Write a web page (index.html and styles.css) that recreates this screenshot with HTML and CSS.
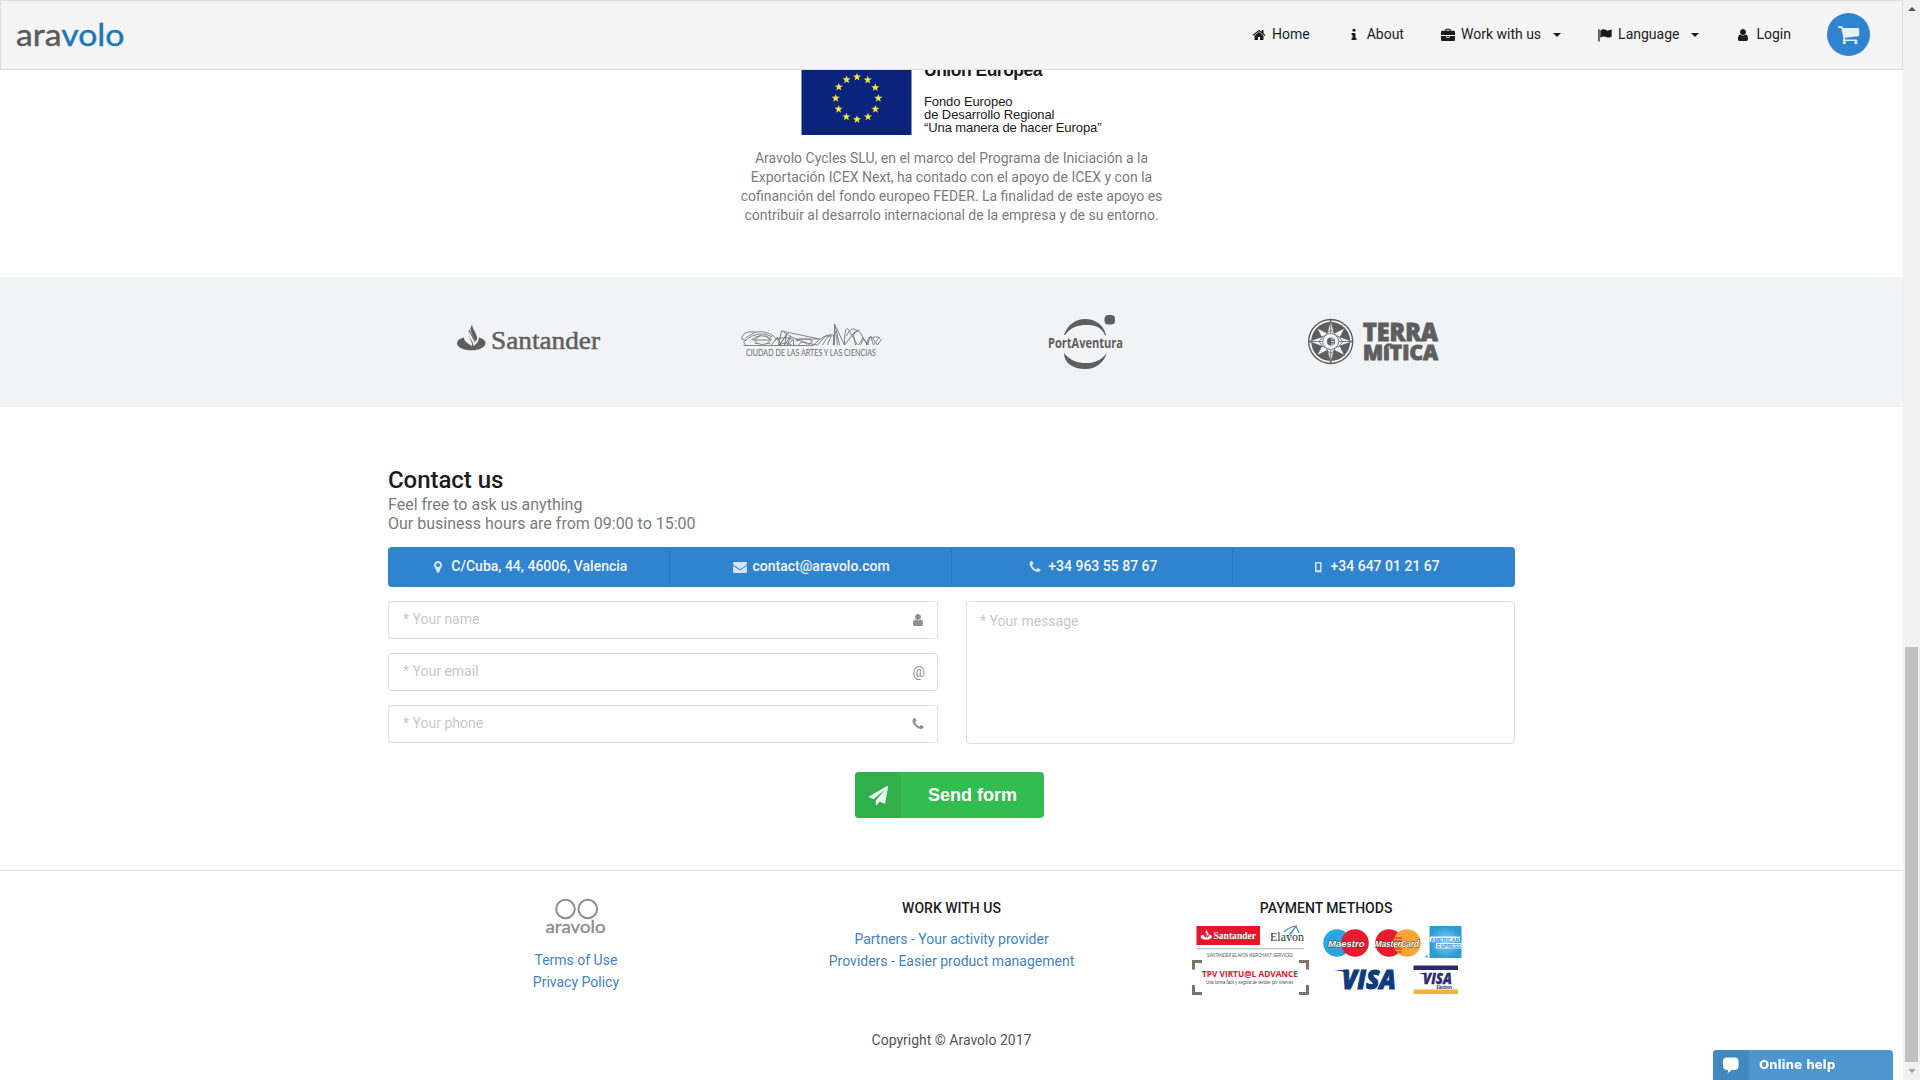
FILE: index.html
```html
<!DOCTYPE html>
<html lang="en">
<head>
<meta charset="utf-8">
<title>Aravolo</title>
<link rel="stylesheet" href="styles.css">
</head>
<body>
<svg class="defs" width="0" height="0" aria-hidden="true">
  <symbol id="home" viewBox="0 0 1792 1792"><path d="M1472 992v480q0 26-19 45t-45 19h-384v-384h-256v384h-384q-26 0-45-19t-19-45v-480q0-1 .5-3t.5-3l575-474 575 474q1 2 1 6zm223-69l-62 74q-8 9-21 11h-3q-13 0-21-7l-692-577-692 577q-12 8-24 7-13-2-21-11l-62-74q-8-10-7-23.5t11-21.5l719-599q32-26 76-26t76 26l244 204v-195q0-14 9-23t23-9h192q14 0 23 9t9 23v408l219 182q10 8 11 21.5t-7 23.5z"/></symbol>
  <symbol id="info" viewBox="0 0 1792 1792"><path d="M1216 1344v128q0 26-19 45t-45 19h-512q-26 0-45-19t-19-45v-128q0-26 19-45t45-19h64v-384h-64q-26 0-45-19t-19-45v-128q0-26 19-45t45-19h384q26 0 45 19t19 45v576h64q26 0 45 19t19 45zm-128-1152v192q0 26-19 45t-45 19h-256q-26 0-45-19t-19-45v-192q0-26 19-45t45-19h256q26 0 45 19t19 45z"/></symbol>
  <symbol id="briefcase" viewBox="0 0 14 14"><path d="M4.2 2.8V1.6Q4.2.7 5.1.7h3.8q.9 0 .9.900v1.200h2.900q1.300 0 1.300 1.300v3H0v-3q0-1.300 1.300-1.300zM5.300 2.800h3.400v-1H5.300zM0 8h5.300v1.300q0 .4.4.4h2.600q.4 0 .4-.4V8H14v3.800q0 1.300-1.300 1.300H1.300Q0 13.100 0 11.800zM6.200 8h1.600v.9H6.200z"/></symbol>
  <symbol id="flag" viewBox="0 0 14 14"><path d="M.3 1.200h1.300v12.300H.3zM2.300 2.500C5 .8 6.200.9 8 1.900c1.900 1 3.400.500 5.700-.6v7.100c-2.200 1.200-3.700 1.700-5.700.6-1.800-.9-3.200-.9-5.700.7z"/></symbol>
  <symbol id="user" viewBox="0 0 1792 1792"><path d="M1536 1399q0 109-62.500 187t-150.500 78h-854q-88 0-150.500-78t-62.500-187q0-85 8.500-160.500t31.500-152 58.500-131 94-89 134.500-34.500q131 128 313 128t313-128q76 0 134.500 34.500t94 89 58.500 131 31.500 152 8.500 160.500zm-256-887q0 159-112.500 271.500t-271.500 112.500-271.500-112.500-112.500-271.500 112.500-271.500 271.500-112.500 271.500 112.500 112.500 271.500z"/></symbol>
  <symbol id="cart" viewBox="0 0 1792 1792"><path d="M704 1536q0 52-38 90t-90 38-90-38-38-90 38-90 90-38 90 38 38 90zm896 0q0 52-38 90t-90 38-90-38-38-90 38-90 90-38 90 38 38 90zm128-1088v512q0 24-16.500 42.500t-40.500 21.500l-1044 122q13 60 13 70 0 16-24 64h920q26 0 45 19t19 45-19 45-45 19h-1024q-26 0-45-19t-19-45q0-11 8-31.500t16-36 21.500-40 15.500-29.500l-177-823h-204q-26 0-45-19t-19-45 19-45 45-19h256q16 0 28.500 6.500t19.500 15.500 13 24.500 8 26 5.500 29.500 4.500 26h1201q26 0 45 19t19 45z"/></symbol>
  <symbol id="marker" viewBox="0 0 1792 1792"><path d="M1152 640q0-106-75-181t-181-75-181 75-75 181 75 181 181 75 181-75 75-181zm256 0q0 109-33 179l-364 774q-16 33-47.500 52t-67.500 19-67.500-19-46.500-52l-365-774q-33-70-33-179 0-212 150-362t362-150 362 150 150 362z"/></symbol>
  <symbol id="mail" viewBox="0 0 1792 1792"><path d="M1792 710v794q0 66-47 113t-113 47h-1472q-66 0-113-47t-47-113v-794q44 49 101 87 362 246 497 345 57 42 92.500 65.500t94.500 48 110 24.500h2q51 0 110-24.500t94.500-48 92.500-65.500q170-123 498-345 57-39 100-87zm0-294q0 79-49 151t-122 123q-376 261-468 325-10 7-42.500 31t-54 38.500-52 32.500-57.500 27-50 9h-2q-23 0-50-9t-57.500-27-52-32.500-54-38.500-42.500-31q-91-64-262-182.500t-205-142.500q-62-42-117-115.500t-55-136.500q0-78 41.500-130t118.500-52h1472q65 0 112.500 47t47.500 113z"/></symbol>
  <symbol id="phone" viewBox="0 0 1792 1792"><path d="M1600 1240q0 27-10 70.500t-21 68.500q-21 50-122 106-94 51-186 51-27 0-52.500-3.500t-57.500-12.500-47.500-14.500-55.500-20.500-49-18q-98-35-175-83-128-79-264.500-215.500t-215.500-264.500q-48-77-83-175-3-9-18-49t-20.500-55.500-14.500-47.500-12.500-57.500-3.500-52.500q0-92 51-186 56-101 106-122 25-11 68.500-21t70.500-10q14 0 21 3 18 6 53 76 11 19 30 54t35 63.500 31 53.500q3 4 17.500 25t21.500 35.500 7 28.500q0 20-28.500 50t-62 55-62 53-28.500 46q0 9 5 22.500t8.500 20.500 14 24 11.500 19q76 137 174 235t235 174q2 1 19 11.500t24 14 20.500 8.500 22.500 5q18 0 46-28.500t53-62 55-62 50-28.500q14 0 28.500 7t35.500 21.500 25 17.500q25 15 53.500 31t63.500 35 54 30q70 35 76 53 3 7 3 21z"/></symbol>
  <symbol id="mobile" viewBox="0 0 14 14"><path fill-rule="evenodd" d="M4 2h6.500v10.200H4zM5.500 3.600v6.600H9V3.600z"/></symbol>
  <symbol id="plane" viewBox="0 0 1792 1792"><path d="M1764 11q33 24 27 64l-256 1536q-5 29-32 45-14 8-31 8-11 0-24-5l-453-185-242 295q-18 23-49 23-13 0-22-4-19-7-30.500-23.500t-11.500-36.500v-349l864-1059-1069 925-395-162q-37-14-40-55-2-40 32-59l1664-960q15-9 32-9 20 0 36 11z"/></symbol>
  <symbol id="star" viewBox="-5 -5 10 10"><path d="M0-4.800 1.150-1.550 4.560-1.480 1.840.6 2.820 3.880 0 1.920-2.820 3.880-1.840.6-4.560-1.480-1.150-1.550z"/></symbol>
  <symbol id="flame" viewBox="0 0 29 27"><path d="M7 13.300C2.500 14.500 0 16.500 0 19c0 4 6.500 7.300 14.500 7.300S29 23 29 19c0-2.500-2.600-4.600-6.800-5.700.2 1.500-.3 3-1 4.200-.8 1.600-3.400 3.500-4.700 4.500.2-2.500-.5-4-2-6.300-2.200-3.400-4-6-2.600-10.200.4 3.700 5.500 9 6 13.500.9-3.200-.8-5.500-2.400-8.500C13.700 7 13 4 15.300 0c.2 4.500 4.700 9 5.200 13.500-.2 2-1 3.700-2 5 1 0 .5-.6.3-1.600-1.500-5-6.300-8-5.700-12-3 3.700-1 8 1 11.500.8 1.600 1.200 3 1 5.500C10 19 7 16.300 7 13.300z"/></symbol>
</svg>

<div class="page">
  <header class="topbar">
    <svg class="brand" width="114" height="48" viewBox="0 0 114 48"><text x="1" y="34.500" textLength="108.500" lengthAdjust="spacingAndGlyphs"><tspan fill="#5a5a5a" stroke="#5a5a5a">ara</tspan><tspan fill="#1d76b5" stroke="#1d76b5">volo</tspan></text></svg>
    <nav class="menu">
      <a class="item"><svg class="icon"><use href="#home"/></svg>Home</a>
      <a class="item"><svg class="icon"><use href="#info"/></svg>About</a>
      <a class="item"><svg class="icon"><use href="#briefcase"/></svg>Work with us<i class="caret"></i></a>
      <a class="item"><svg class="icon"><use href="#flag"/></svg>Language<i class="caret"></i></a>
      <a class="item"><svg class="icon"><use href="#user"/></svg>Login</a>
      <a class="cart"><svg width="23" height="23"><use href="#cart"/></svg></a>
    </nav>
  </header>

  <section class="funding">
    <svg width="302" height="65" viewBox="801.500 70 302 65">
      <path fill="#0a237b" d="M802 70h110v65H802z"/>
      <g fill="#f4e63a">
        <use href="#star" x="853" y="72.500" width="9" height="9"/><use href="#star" x="863.700" y="75.400" width="9" height="9"/>
        <use href="#star" x="871.300" y="83.100" width="9" height="9"/><use href="#star" x="874.300" y="93.700" width="9" height="9"/>
        <use href="#star" x="871.400" y="104.700" width="9" height="9"/><use href="#star" x="864" y="112.300" width="9" height="9"/>
        <use href="#star" x="853" y="115" width="9" height="9"/><use href="#star" x="842.400" y="112.300" width="9" height="9"/>
        <use href="#star" x="834.600" y="104.700" width="9" height="9"/><use href="#star" x="831.700" y="93.700" width="9" height="9"/>
        <use href="#star" x="834.800" y="82.500" width="9" height="9"/><use href="#star" x="842.600" y="75.200" width="9" height="9"/>
      </g>
      <g class="eu" fill="#1a1a1a">
        <text x="924.500" y="75.600" font-size="17.500" font-weight="700" textLength="118.500">Unión Europea</text>
        <text x="924.500" y="105.500" textLength="88.500">Fondo Europeo</text>
        <text x="924.500" y="118.500" textLength="130.500">de Desarrollo Regional</text>
        <text x="924.500" y="131.500" textLength="177.500">“Una manera de hacer Europa”</text>
      </g>
    </svg>
    <p>Aravolo Cycles SLU, en el marco del Programa de Iniciación a la<br>Exportación ICEX Next, ha contado con el apoyo de ICEX y con la<br>cofinanción del fondo europeo FEDER. La finalidad de este apoyo es<br>contribuir al desarrolo internacional de la empresa y de su entorno.</p>
  </section>

  <section class="partners">
    <svg width="146" height="60" viewBox="455 312 146 60" fill="#5e5e5e">
      <use href="#flame" x="456.500" y="324.500" width="29.500" height="26.500"/>
      <text class="serif" x="491" y="349" font-size="26" stroke="#5e5e5e" stroke-width=".5" textLength="109" lengthAdjust="spacingAndGlyphs">Santander</text>
    </svg>
    <svg width="142" height="60" viewBox="740.500 312 142 60" fill="none" stroke="#777" stroke-width=".9">
      <path d="M744 345.500h70M742 339c2-9 10-7 14-7q14-2 22 8M742 339l4 1-2 2 3 3.500M745 341q14-12 28-4M746 338l10-6M752 340q9-8 20-1M753 340h19M755 343q8 3 16 0M761 335l-6 5 4 4M765 335l6 5-4 4M772 345l6-8 3 8M775 340q9-4 18-1M780 345q6-4 12 0M782 331l-3 14M782 331l38 8-24 0M783 331q16 12 35 14M788 333l-8 12 7-10-2 10 6-9-3 9 6-6v6M796 341q10-4 17 0l-4 4M799 345q4-6 9 0M814 345q12-12 20-10v10M818 345l8-9 6 0M823 345q4-8 8-10M828 345q2-7 4-9M835 324v21l-2-1M835 324l10 21M836 327l4 18M836 331l2 14M845 345l11-14 4-1M845 345q0-25 6-12l7 12M847 336q4-10 10-6M856 345l-2-10q5-9 9 2l6 8M859 345l5-8M861 345l3-6 4 6 3-9 3 9 6-8M867 345q2-11 6-7l5 7 4-6M873 338q6-3 7 1"/>
      <text x="746.500" y="356.300" fill="#6c6c6c" stroke="none" font-family="Lato, sans-serif" font-size="8.600" textLength="130" lengthAdjust="spacingAndGlyphs">CIUDAD DE LAS ARTES Y LAS CIENCIAS</text>
    </svg>
    <svg width="78" height="60" viewBox="1047 312 78 60" fill="#5e5e5e">
      <path d="M1064 335c4-11 12-16 21-16 10 0 19 6 21 16-.4.500-1 .2-1.300-.6C1101 327 1095 325 1087 325c-9 0-16 2-22 10zM1064 353c0 10 9 16 21 16s20-8 21.500-16c-4 6-10 9.500-18 10-9 .5-18-1.500-24.500-10z"/>
      <rect x="1104.500" y="315" width="10.500" height="9.500" rx="4"/>
      <text x="1048" y="348" font-family="Open Sans, sans-serif" font-weight="700" font-size="14" textLength="75" lengthAdjust="spacingAndGlyphs">PortAventura</text>
    </svg>
    <svg width="136" height="60" viewBox="1305 312 136 60" fill="#5e5e5e">
      <circle cx="1330.700" cy="341.500" r="22" fill="none" stroke="#5e5e5e" stroke-width="1.400"/>
      <circle cx="1330.700" cy="341.500" r="19.500"/>
      <g fill="#f2f3f5" stroke="#5e5e5e" stroke-width=".8">
        <path d="M1317 328l10 5 3.700-3 4 3 10-5-5 10 3 3.500-3 4 5 10-10-5-4 3-3.700-3-10 5 5-10-3-4 3-3.500zM1330.700 320l4 15 18 6.500-18 6.500-4 15-4-15-18-6.500 18-6.500z"/>
        <circle cx="1330.700" cy="341.500" r="8"/><path d="M1330.700 320v13M1330.700 350v13M1309 341.500h13M1339 341.500h13"/>
      </g>
      <circle cx="1331" cy="341.500" r="4"/><path d="M1331 339h3M1331 341.500h3M1331 344h3" stroke="#f2f3f5"/>
      <g font-family="Open Sans, sans-serif" font-weight="800" stroke="#5e5e5e" stroke-width=".9">
        <text x="1363" y="341" font-size="25" textLength="75" lengthAdjust="spacingAndGlyphs">TERRA</text>
        <text x="1363" y="360" font-size="21" textLength="75" lengthAdjust="spacingAndGlyphs">MíTICA</text>
      </g>
    </svg>
  </section>

  <section class="contact">
    <h2>Contact us</h2>
    <p class="sub">Feel free to ask us anything<br>Our business hours are from 09:00 to 15:00</p>
    <div class="infobar">
      <span><svg class="icon"><use href="#marker"/></svg>C/Cuba, 44, 46006, Valencia</span>
      <span><svg class="icon"><use href="#mail"/></svg>contact@aravolo.com</span>
      <span><svg class="icon"><use href="#phone"/></svg>+34 963 55 87 67</span>
      <span><svg class="icon"><use href="#mobile"/></svg>+34 647 01 21 67</span>
    </div>
    <div class="form">
      <div class="fields">
        <div class="field">* Your name<svg class="icon"><use href="#user"/></svg></div>
        <div class="field">* Your email<span class="at">@</span></div>
        <div class="field">* Your phone<svg class="icon"><use href="#phone"/></svg></div>
      </div>
      <div class="field message">* Your message</div>
    </div>
    <div class="send"><span class="sendicon"><svg width="19" height="19"><use href="#plane"/></svg></span><span class="sendlabel">Send form</span></div>
  </section>

  <footer class="footer">
    <div class="cols">
      <div class="col">
        <svg class="flogo" width="62" height="38" viewBox="545 898 62 38"><g fill="none" stroke="#8e8e8e" stroke-width="2"><circle cx="565.500" cy="909" r="9.300"/><circle cx="587.800" cy="909" r="9.300"/></g><text x="545.500" y="933.300" font-size="18" fill="#8e8e8e" stroke="#8e8e8e" stroke-width=".4" textLength="60" lengthAdjust="spacingAndGlyphs">aravolo</text></svg>
        <a>Terms of Use</a><a>Privacy Policy</a>
      </div>
      <div class="col">
        <h4>WORK WITH US</h4>
        <a>Partners - Your activity provider</a><a>Providers - Easier product management</a>
      </div>
      <div class="col payments">
        <h4>PAYMENT METHODS</h4>
        <svg class="pay" width="276" height="76" viewBox="1188 922 276 76">
          <path fill="#e5152a" d="M1196.500 926h63.500v19h-63.500z"/>
          <use href="#flame" x="1200.500" y="929" width="11.500" height="11" fill="#fff"/>
          <text class="serif" x="1213.500" y="938.800" font-size="9.500" font-weight="700" fill="#fff" textLength="42.500" lengthAdjust="spacingAndGlyphs">Santander</text>
          <text class="serif" x="1270" y="941" font-size="12.500" fill="#333" textLength="34" lengthAdjust="spacingAndGlyphs">Elavon</text>
          <path d="M1284 932q5-5 12-6l-9 12M1291 934l5-8 3 7" fill="none" stroke="#4a90cf" stroke-width="1.200"/>
          <path d="M1196.500 948.800h107.500" stroke="#aaa"/>
          <text x="1207" y="957" font-family="Liberation Sans" font-size="5.500" fill="#555" textLength="86" lengthAdjust="spacingAndGlyphs">SANTANDER ELAVON MERCHANT SERVICES</text>
          <path d="M1202 961.500h-8.500v8M1193.500 985v8.500h8.500M1299 961.500h8.500v8M1307.500 985v8.500h-8.500" fill="none" stroke="#7d7468" stroke-width="3"/>
          <text x="1202" y="976.800" font-family="Open Sans, sans-serif" font-size="9" font-weight="700" fill="#e5152a" textLength="96" lengthAdjust="spacingAndGlyphs">TPV VIRTU@L ADVANCE</text>
          <text x="1206" y="984" font-family="Liberation Sans" font-size="5" fill="#444" textLength="87" lengthAdjust="spacingAndGlyphs">Una forma fácil y segura de vender por Internet</text>
          <circle cx="1337" cy="943" r="13.800" fill="#2aa5e1"/><circle cx="1355" cy="943" r="13.800" fill="#ea1b2d"/>
          <circle cx="1389" cy="943" r="13.800" fill="#ea1b2d"/><circle cx="1407" cy="943" r="13.800" fill="#f9a535"/>
          <path d="M1342 938h8M1342 941h8M1342 949h8M1343 952h7M1394 938h8M1394 941h8M1394 949h8M1395 952h7" stroke="#c51f3a"/>
          <g class="card"><text x="1328" y="946.500" textLength="36.500" lengthAdjust="spacingAndGlyphs">Maestro</text><text x="1375" y="946.500" textLength="44" lengthAdjust="spacingAndGlyphs">MasterCard</text></g>
          <defs><radialGradient id="amex"><stop stop-color="#8fd0ef"/><stop offset="1" stop-color="#2c9bd6"/></radialGradient></defs>
          <path fill="url(#amex)" d="M1429.500 926h32v32h-32z"/>
          <path fill="#fff" fill-opacity=".85" d="M1429.500 936.500h30.500v5.500h-30.500zM1436 943h25.500v5.500H1436z"/>
          <g font-family="Liberation Sans" font-weight="700" font-size="6" fill="#3798cf"><text x="1430.500" y="941.500" textLength="29" lengthAdjust="spacingAndGlyphs">AMERICAN</text><text x="1437" y="948" textLength="24" lengthAdjust="spacingAndGlyphs">EXPRESS</text></g>
          <path fill="#2c9bd6" d="M1425.500 955.500h2v2h-2z"/>
          <text class="visa" x="1342" y="989.200" font-size="26" fill="#103b7d" stroke="#103b7d" textLength="54" lengthAdjust="spacingAndGlyphs">VISA</text>
          <path fill="#103b7d" d="M1334.500 970h13l2.500 4q-7-3-15.500-4z"/>
          <path fill="#2a2c6c" d="M1413.500 965.500h44.500v4.500h-44.500z"/><path fill="#f5b335" d="M1413.500 989.500h44.500v4.500h-44.500z"/>
          <text class="visa" x="1423" y="984" font-size="15" fill="#2a2c6c" stroke="#2a2c6c" stroke-width=".3" textLength="29" lengthAdjust="spacingAndGlyphs">VISA</text>
          <path fill="#2a2c6c" d="M1418 973h7l1.500 2.500q-4-2-8.500-2.500z"/>
          <text x="1436.500" y="988.500" font-family="Liberation Sans" font-weight="700" font-size="4.500" fill="#2a2c6c" textLength="15.500">Electron</text>
        </svg>
      </div>
    </div>
    <p class="copy">Copyright © Aravolo 2017</p>
  </footer>

  <div class="chat">
    <span class="chaticon"><svg width="18" height="17" viewBox="0 0 18 17"><path fill="#fff" d="M5 .5h7.500q4 0 4 4v4.500q0 4-4 4H9.300q-1 2-3.800 3 .7-1.500.5-3-5 0-5-4V4.500q0-4 4-4z"/></svg></span>
    <span class="chatlabel">Online help</span>
  </div>
</div>
<div class="scrollbar"><i class="up"></i><i class="thumb"></i><i class="down"></i></div>
</body>
</html>
```
FILE: styles.css
```css
* { box-sizing: border-box; }
html, body { margin: 0; height: 1080px; overflow: hidden; }
body { display: flex; background: #fff; font: 14px/20px Roboto, sans-serif; color: #1b1c1d; }
.defs { position: absolute; }
svg { display: block; flex: none; }
h2, h4, p { margin: 0; font-weight: 400; }

.page { width: 1903px; height: 1080px; overflow: hidden; }

.topbar { display: flex; align-items: center; justify-content: space-between; height: 70px; padding: 0 32px 0 14px; background: #f4f4f4; border: 1px solid #dedede; }
.brand { font-family: Lato, sans-serif; font-size: 31px; stroke-width: .4; }
.menu { display: flex; align-items: center; }
.item { display: flex; align-items: center; padding: 0 18px 2px; }
.icon { width: 14px; height: 14px; margin: 0 6px 0 1px; fill: currentColor; }
.item .icon { margin-top: 2px; }
.caret { margin: 2px 0 0 12px; border: 4px solid transparent; border-top: 4px solid #1b1c1d; border-bottom: 0; }
.cart { display: grid; place-items: center; width: 43px; height: 43px; margin: 0 0 1px 18px; border-radius: 50%; background: #3083ce; }
.cart svg { fill: #e8f1fa; }

.funding { display: flex; flex-direction: column; align-items: center; height: 207px; }
.funding > svg { margin-left: 1px; }
.eu { font: 13px "Liberation Sans", sans-serif; }
.funding p { margin-top: 14px; line-height: 19px; text-align: center; color: #7b7b7b; white-space: nowrap; }

.partners { display: grid; grid-template-columns: 285px 307px 258px 136px; align-items: center; height: 130px; padding-left: 455px; background: #f2f3f5; }
.partners svg { overflow: visible; }
.serif { font-family: "Liberation Serif", serif; }

.contact { width: 1127px; height: 463px; margin: 0 auto; padding-top: 59px; }
h2 { font-size: 24px; line-height: 28px; font-weight: 500; letter-spacing: -.05px; }
.sub { padding-top: 1px; font-size: 16px; line-height: 19px; color: #7b7b7b; }
.infobar { display: grid; grid-template-columns: repeat(4, 1fr); height: 40px; margin-top: 14px; border-radius: 4px; background: #3083ce; color: #f2f7fc; font-weight: 500; }
.infobar span { display: flex; align-items: center; justify-content: center; padding: 0 0 2px 1px; border-right: 1px solid #2e7ac0; }
.infobar span:last-child { border: 0; }
.infobar .icon { margin-top: 2px; opacity: .85; }
.form { display: grid; grid-template-columns: 550px 549px; column-gap: 28px; margin-top: 14px; }
.fields { display: grid; row-gap: 14px; align-content: start; }
.field { display: flex; align-items: center; justify-content: space-between; height: 38px; padding: 0 11px 2px 14px; border: 1px solid #dcdcdc; border-radius: 4px; color: #c8c8c8; }
.field .icon { color: #909090; margin: 2px 1px 0; }
.at { padding: 1px 1px 0 0; color: #909090; }
.message { height: 143px; align-items: flex-start; padding: 9px 13px; }
.send { display: flex; width: 189px; height: 46px; margin: 28px 0 0 467px; border-radius: 4px; overflow: hidden; background: #33bd50; color: #fff; }
.sendicon { display: grid; place-items: center; width: 46px; background: #30b04b; fill: #e9f7ec; }
.sendlabel { flex: 1; padding-left: 27px; font: bold 18px/46px "Liberation Sans", sans-serif; }

.footer { height: 210px; border-top: 1px solid #dedede; text-align: center; }
.cols { display: grid; grid-template-columns: repeat(3, 375.600px); justify-content: center; height: 159px; }
.col { display: flex; flex-direction: column; align-items: center; padding-top: 27px; }
.payments { padding-right: 2px; }
.flogo { margin-bottom: 13px; font-family: Lato, sans-serif; }
h4 { font-weight: 500; margin-bottom: 10px; }
.col a { line-height: 22px; color: #4183c4; }
.col h4 + .pay { margin-top: -6px; }
.card { font: italic bold 9.500px "Liberation Sans", sans-serif; fill: #fff; stroke: #333; stroke-width: .8; paint-order: stroke; }
.visa { font-family: "Open Sans", sans-serif; font-weight: 800; font-style: italic; }
.copy { color: #555; }

.chat { position: fixed; left: 1713px; bottom: 0; display: flex; width: 180px; height: 30px; border-radius: 4px 4px 0 0; overflow: hidden; background: #4f95d0; color: #fff; }
.chaticon { display: grid; place-items: center; width: 36px; background: #4289c2; }
.chatlabel { padding-left: 10px; font: bold 12px/30px "DejaVu Sans", sans-serif; letter-spacing: -.1px; }

.scrollbar { display: flex; flex-direction: column; align-items: center; width: 17px; height: 1080px; background: #f1f1f1; }
.up { margin-top: 7px; border: 4px solid transparent; border-top: 0; border-bottom: 4px solid #505050; }
.thumb { width: 13px; height: 415px; margin-top: 636px; background: #c1c1c1; }
.down { margin-top: 7px; border: 4px solid transparent; border-bottom: 0; border-top: 4px solid #a3a3a3; }
```
